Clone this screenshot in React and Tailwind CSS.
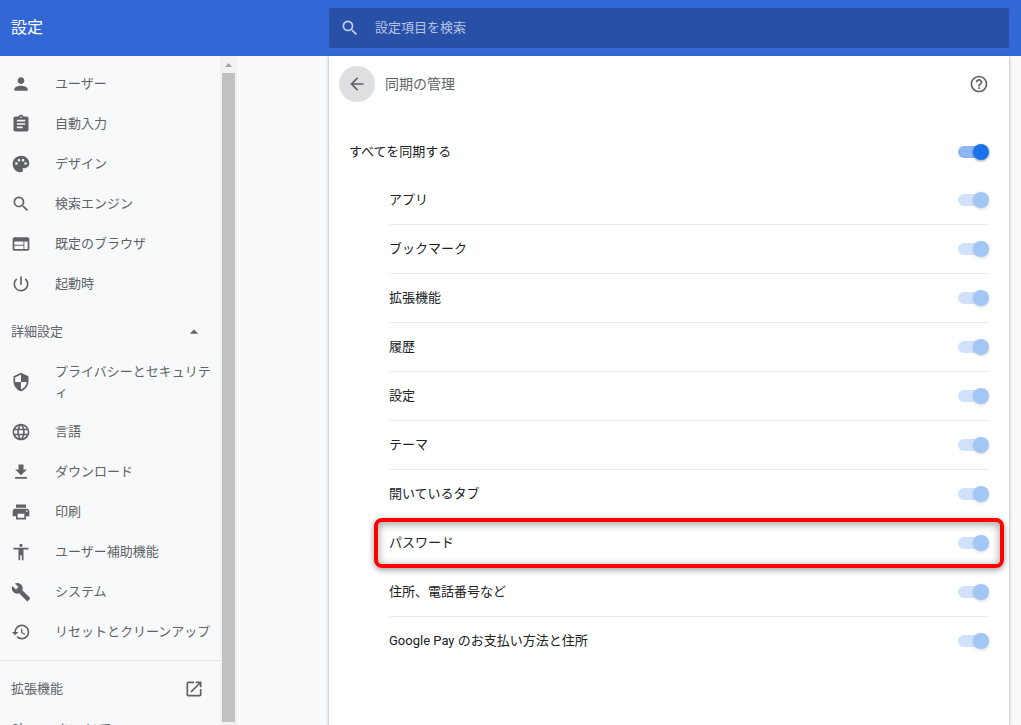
import React, { useState } from "react";
import {
  MdPerson, MdAssignment, MdPalette, MdSearch, MdWeb, MdPowerSettingsNew, MdSecurity,
  MdLanguage, MdFileDownload, MdPrint, MdAccessibility, MdBuild, MdRestore,
  MdOpenInNew, MdArrowBack, MdHelpOutline, MdArrowDropUp,
} from "react-icons/md";

const basic = [
  [MdPerson, "ユーザー"],
  [MdAssignment, "自動入力"],
  [MdPalette, "デザイン"],
  [MdSearch, "検索エンジン"],
  [MdWeb, "既定のブラウザ"],
  [MdPowerSettingsNew, "起動時"],
];

const advanced = [
  [MdSecurity, "プライバシーとセキュリティ"],
  [MdLanguage, "言語"],
  [MdFileDownload, "ダウンロード"],
  [MdPrint, "印刷"],
  [MdAccessibility, "ユーザー補助機能"],
  [MdBuild, "システム"],
  [MdRestore, "リセットとクリーンアップ"],
];

const syncTypes = [
  "アプリ", "ブックマーク", "拡張機能", "履歴", "設定", "テーマ",
  "開いているタブ", "パスワード", "住所、電話番号など", "Google Pay のお支払い方法と住所",
];

function NavItem({ icon: Icon, label }) {
  return (
    <a href="#" className="flex items-center py-2.5 pl-[11px]">
      <Icon className="mr-6 size-5 shrink-0" />
      <span className="leading-5">{label}</span>
    </a>
  );
}

function Toggle({ id, checked, disabled, onChange }) {
  return (
    <span className={`relative flex h-4 w-[31px] shrink-0 items-center ${disabled ? "opacity-40" : ""}`}>
      <input
        id={id}
        type="checkbox"
        role="switch"
        checked={checked}
        disabled={disabled}
        onChange={onChange}
        className="peer h-3 w-7 appearance-none rounded-full bg-[#bdc1c6] checked:bg-[#8cb7f5]"
      />
      <span className="pointer-events-none absolute left-0 size-4 rounded-full bg-white shadow-[0_1px_3px_rgba(0,0,0,0.4)] peer-checked:right-0 peer-checked:left-auto peer-checked:bg-[#1a73e8]" />
    </span>
  );
}

export default function App() {
  const [all, setAll] = useState(true);
  return (
    <div className="flex h-screen flex-col overflow-hidden bg-[#f8f9fa] font-[Roboto,'Noto_Sans_CJK_JP',sans-serif] text-[13px] text-[#5f6368]">
      <header className="flex h-14 shrink-0 items-center bg-[#3367d6] pr-3">
        <h1 className="w-[329px] shrink-0 pl-[11px] text-base text-white">設定</h1>
        <label className="flex h-10 flex-1 items-center rounded-xs bg-[#2850a7] pl-[11px] text-[#c2cfea]">
          <MdSearch className="mr-[15px] size-5" />
          <input
            type="search"
            aria-label="設定項目を検索"
            placeholder="設定項目を検索"
            className="min-w-0 flex-1 bg-transparent outline-none placeholder:text-[#b7c5e5]"
          />
        </label>
      </header>

      <div className="flex min-h-0 flex-1">
        <div className="flex w-[237px] shrink-0">
          <nav className="min-w-0 flex-1 overflow-hidden pt-2">
            {basic.map(([icon, label]) => <NavItem key={label} icon={icon} label={label} />)}
            <button type="button" className="mt-2 flex h-10 w-full items-center justify-between pr-4 pl-[11px]">
              詳細設定
              <MdArrowDropUp className="size-5" />
            </button>
            <div>
              {advanced.map(([icon, label]) => <NavItem key={label} icon={icon} label={label} />)}
            </div>
            <div className="mt-2 border-t border-[#e0e2e5] pt-2">
              <a href="#" className="flex h-10 items-center justify-between pr-4 pl-[11px]">
                拡張機能
                <MdOpenInNew className="size-5" />
              </a>
              <a href="#" className="flex h-10 items-center pl-[11px]">Chrome について</a>
            </div>
          </nav>
          <div className="flex w-[17px] flex-col items-center bg-[#f1f1f1] pb-[3px]" aria-hidden="true">
            <svg viewBox="0 0 17 17" className="size-[17px] shrink-0 fill-[#a3a3a3]"><path d="M5 11h7L8.500 7z" /></svg>
            <div className="w-[13px] flex-1 bg-[#c1c1c1]" />
          </div>
        </div>

        <main className="mr-3 ml-[92px] min-w-0 flex-1 bg-white shadow-[0_1px_3px_rgba(60,64,67,0.5)]">
          <div className="flex h-14 items-center pr-5 pl-2.5">
            <button type="button" aria-label="戻る" className="flex size-9 items-center justify-center rounded-full bg-[#dedfe0]">
              <MdArrowBack className="size-5" />
            </button>
            <h2 className="ml-2.5 flex-1 text-sm">同期の管理</h2>
            <button type="button" aria-label="ヘルプ"><MdHelpOutline className="size-5" /></button>
          </div>
          <div className="px-5 pt-4 text-[#202124]">
            <div className="flex h-12 items-center justify-between">
              <label htmlFor="sync-all">すべてを同期する</label>
              <Toggle id="sync-all" checked={all} onChange={(e) => setAll(e.target.checked)} />
            </div>
            <ul className="ml-10 divide-y divide-[#ebebec]">
              {syncTypes.map((label, i) => (
                <li key={label} className="relative box-content flex h-12 items-center justify-between">
                  <label htmlFor={`sync-${i}`}>{label}</label>
                  <Toggle id={`sync-${i}`} checked disabled onChange={() => {}} />
                  {label === "パスワード" && (
                    <span className="pointer-events-none absolute -inset-x-[15px] -inset-y-px rounded-lg border-4 border-[#ff0000] shadow-[0_2px_6px_rgba(0,0,0,0.4),inset_0_2px_8px_rgba(0,0,0,0.4)]" />
                  )}
                </li>
              ))}
            </ul>
          </div>
        </main>
      </div>
    </div>
  );
}
